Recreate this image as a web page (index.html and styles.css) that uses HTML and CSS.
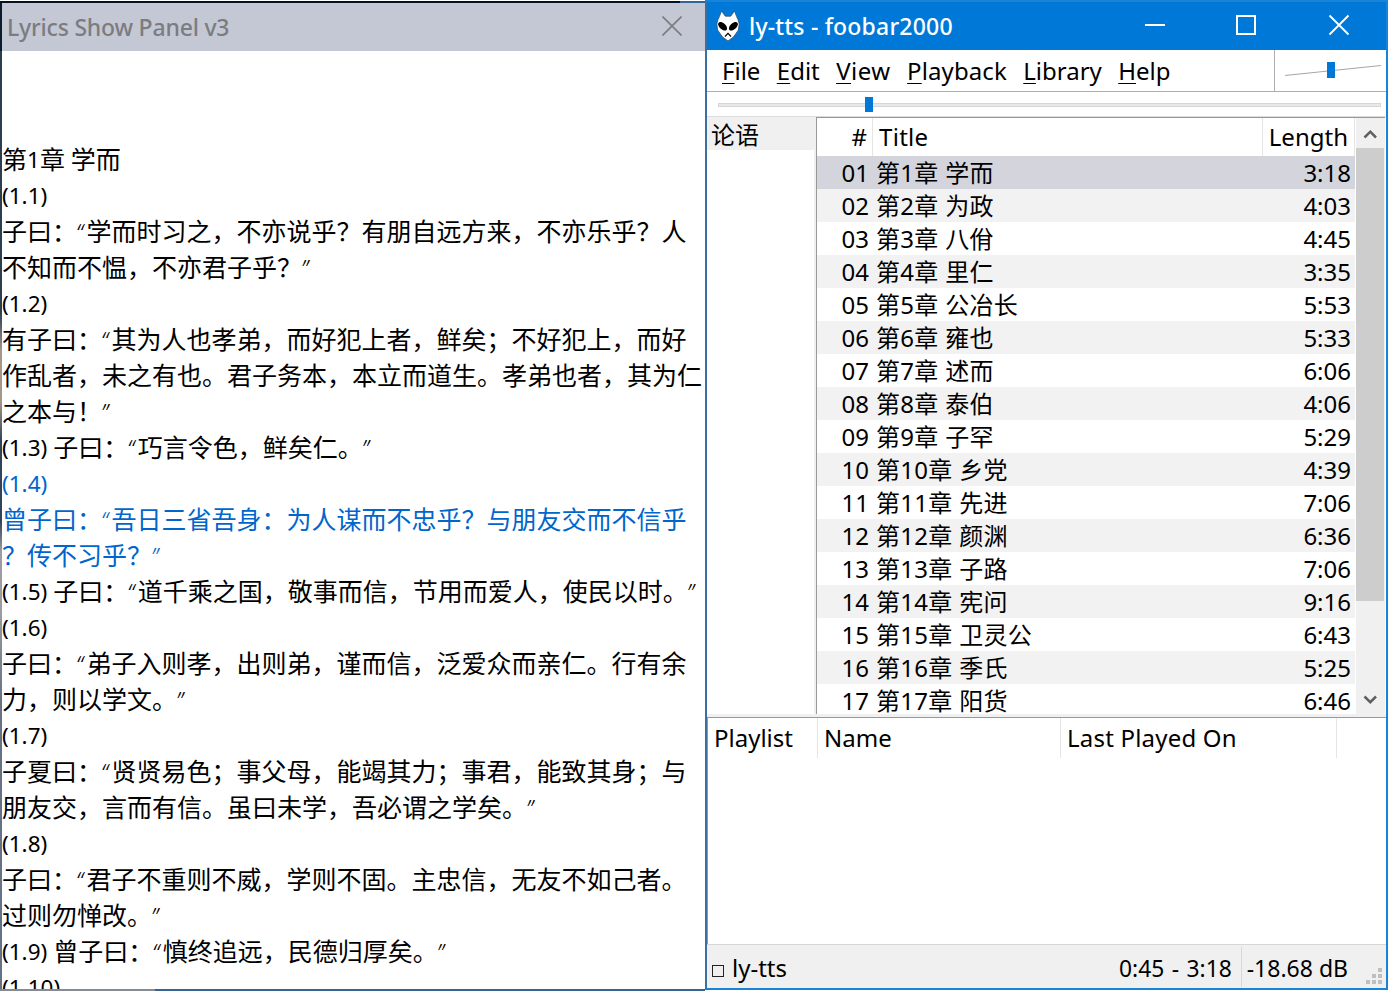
FILE: index.html
```html
<!DOCTYPE html>
<html lang="zh-CN">
<head>
<meta charset="utf-8">
<title>foobar2000</title>
<link rel="stylesheet" href="styles.css">
</head>
<body>
<div class="desktop">
  <section class="lyrics-window">
    <header class="lyrics-title">
      <span class="lyrics-name">Lyrics Show Panel v3</span>
      <svg class="lyrics-close" width="20" height="20" viewBox="0 0 20 20"><path d="M0.5 0.5 19.5 19.5M19.5 0.5 0.5 19.5" stroke="#7c7c80" stroke-width="1.6" fill="none"/></svg>
    </header>
    <div class="lyrics">
      <p>第<i>1</i>章<i> </i>学而</p>
      <p><i>(1.1)</i></p>
      <p>子曰：<q>“</q>学而时习之，不亦说乎？有朋自远方来，不亦乐乎？人</p>
      <p>不知而不愠，不亦君子乎？<q>”</q></p>
      <p><i>(1.2)</i></p>
      <p>有子曰：<q>“</q>其为人也孝弟，而好犯上者，鲜矣；不好犯上，而好</p>
      <p>作乱者，未之有也。君子务本，本立而道生。孝弟也者，其为仁</p>
      <p>之本与！<q>”</q></p>
      <p><i>(1.3) </i>子曰：<q>“</q>巧言令色，鲜矣仁。<q>”</q></p>
      <p class="current"><i>(1.4)</i></p>
      <p class="current">曾子曰：<q>“</q>吾日三省吾身：为人谋而不忠乎？与朋友交而不信乎</p>
      <p class="current">？传不习乎？<q>”</q></p>
      <p><i>(1.5) </i>子曰：<q>“</q>道千乘之国，敬事而信，节用而爱人，使民以时。<q>”</q></p>
      <p><i>(1.6)</i></p>
      <p>子曰：<q>“</q>弟子入则孝，出则弟，谨而信，泛爱众而亲仁。行有余</p>
      <p>力，则以学文。<q>”</q></p>
      <p><i>(1.7)</i></p>
      <p>子夏曰：<q>“</q>贤贤易色；事父母，能竭其力；事君，能致其身；与</p>
      <p>朋友交，言而有信。虽曰未学，吾必谓之学矣。<q>”</q></p>
      <p><i>(1.8)</i></p>
      <p>子曰：<q>“</q>君子不重则不威，学则不固。主忠信，无友不如己者。</p>
      <p>过则勿惮改。<q>”</q></p>
      <p><i>(1.9) </i>曾子曰：<q>“</q>慎终追远，民德归厚矣。<q>”</q></p>
      <p><i>(1.10)</i></p>
    </div>
  </section>

  <section class="player">
    <header class="player-title">
      <svg class="logo" width="24" height="32" viewBox="0 0 24 32">
        <path d="M5.5 1 9.3 6.2H14.7L18.5 1 20.6 6.5 22 9.5 23.2 14 22.4 20 17.5 27 12 31 6.500 27 1.600 20 0.800 14 2 9.500 3.400 6.500Z" fill="#fff" stroke="#34506e" stroke-width="0.800"/>
        <ellipse cx="6.600" cy="16.300" rx="5.400" ry="3.100" transform="rotate(42 6.600 16.300)" fill="#000"/>
        <ellipse cx="17.400" cy="16.300" rx="5.400" ry="3.100" transform="rotate(-42 17.400 16.300)" fill="#000"/>
        <path d="M9 26.500 12 23.300 15 26.500" fill="none" stroke="#000" stroke-width="1.200"/>
      </svg>
      <span class="player-name">ly-tts - foobar2000</span>
      <svg class="controls" width="206" height="22" viewBox="0 0 206 22" fill="none" stroke="#fff">
        <path d="M0 11H20" stroke-width="2"/><rect x="92" y="2" width="18" height="18" stroke-width="2"/><path d="M184.500 1.500 203.500 20.500M203.500 1.500 184.500 20.500" stroke-width="1.800"/>
      </svg>
    </header>
    <div class="toolbar">
      <nav class="menu"><span><u>F</u>ile</span><span><u>E</u>dit</span><span class="view"><u>V</u>iew</span><span class="playback"><u>P</u>layback</span><span><u>L</u>ibrary</span><span><u>H</u>elp</span></nav>
      <svg class="volume" width="111" height="41" viewBox="0 0 111 41"><path d="M10 25.500 106 15.500" stroke="#a6a6a6"/><rect x="52" y="12" width="8" height="16" fill="#0078d7"/></svg>
    </div>
    <div class="seek"><div class="track"><div class="thumb"></div></div></div>
    <div class="browser">
      <aside class="playlists"><div class="playlist">论语</div></aside>
      <main class="tracks">
        <div class="row head"><span class="num">#</span><span class="name">Title</span><span class="len">Length</span></div>
        <div class="row selected"><span class="num">01</span><span class="name">第1章 学而</span><span class="len">3:18</span></div>
        <div class="row alt"><span class="num">02</span><span class="name">第2章 为政</span><span class="len">4:03</span></div>
        <div class="row"><span class="num">03</span><span class="name">第3章 八佾</span><span class="len">4:45</span></div>
        <div class="row alt"><span class="num">04</span><span class="name">第4章 里仁</span><span class="len">3:35</span></div>
        <div class="row"><span class="num">05</span><span class="name">第5章 公冶长</span><span class="len">5:53</span></div>
        <div class="row alt"><span class="num">06</span><span class="name">第6章 雍也</span><span class="len">5:33</span></div>
        <div class="row"><span class="num">07</span><span class="name">第7章 述而</span><span class="len">6:06</span></div>
        <div class="row alt"><span class="num">08</span><span class="name">第8章 泰伯</span><span class="len">4:06</span></div>
        <div class="row"><span class="num">09</span><span class="name">第9章 子罕</span><span class="len">5:29</span></div>
        <div class="row alt"><span class="num">10</span><span class="name">第10章 乡党</span><span class="len">4:39</span></div>
        <div class="row"><span class="num">11</span><span class="name">第11章 先进</span><span class="len">7:06</span></div>
        <div class="row alt"><span class="num">12</span><span class="name">第12章 颜渊</span><span class="len">6:36</span></div>
        <div class="row"><span class="num">13</span><span class="name">第13章 子路</span><span class="len">7:06</span></div>
        <div class="row alt"><span class="num">14</span><span class="name">第14章 宪问</span><span class="len">9:16</span></div>
        <div class="row"><span class="num">15</span><span class="name">第15章 卫灵公</span><span class="len">6:43</span></div>
        <div class="row alt"><span class="num">16</span><span class="name">第16章 季氏</span><span class="len">5:25</span></div>
        <div class="row"><span class="num">17</span><span class="name">第17章 阳货</span><span class="len">6:46</span></div>
      </main>
      <div class="scrollbar">
        <svg width="28" height="30" viewBox="0 0 28 30"><path d="M8.500 19.500 14.300 13.700 20 19.500" fill="none" stroke="#606060" stroke-width="2.500"/></svg>
        <div class="scroll-thumb"></div>
        <svg width="28" height="30" viewBox="0 0 28 30"><path d="M8.500 12.500 14.300 18.200 20 12.500" fill="none" stroke="#606060" stroke-width="2.500"/></svg>
      </div>
    </div>
    <div class="history">
      <div class="history-head"><span class="h-playlist">Playlist</span><span class="h-name">Name</span><span class="h-last">Last Played On</span></div>
    </div>
    <footer class="status">
      <span class="stop"></span><span class="state">ly-tts</span><span class="time">0:45 - 3:18</span><span class="db">-18.68 dB</span>
      <svg class="grip" width="16" height="16" viewBox="0 0 16 16" fill="#bfbfbf"><path d="M12 0h4v4h-4zM6 6h4v4H6zM12 6h4v4h-4zM0 12h4v4H0zM6 12h4v4H6zM12 12h4v4h-4z"/></svg>
    </footer>
  </section>
</div>
</body>
</html>
```
FILE: styles.css
```css
* { box-sizing: border-box; }
body {
  margin: 0;
  width: 1388px;
  height: 991px;
  overflow: hidden;
  background: #fff;
  color: #000;
  font-family: "Noto Sans", "Noto Sans CJK SC", sans-serif;
  font-size: 24px;
}
.desktop { display: flex; height: 991px; }

.lyrics-window {
  width: 705px;
  height: 990px;
  margin-top: 1px;
  padding: 2px 0 2px 2px;
  display: flex;
  flex-direction: column;
  background:
    linear-gradient(90deg, #04121f 0 680px, #336494 680px) top / 100% 2px no-repeat,
    linear-gradient(90deg, #858b90 0 155px, #376392 155px) bottom / 100% 2px no-repeat,
    linear-gradient(#0b1c2c 0 50px, #2c3d50 50px 310px, #a59788 350px 400px, #31435a 440px 520px, #9c9d9e 550px 610px, #657184 700px) left / 2px 100% no-repeat,
    #fff;
}
.lyrics-title {
  height: 48px;
  flex: none;
  display: flex;
  align-items: center;
  justify-content: space-between;
  padding: 0 23px 0 5px;
  background: #c4c8d4;
  color: #7b7c80;
  font-weight: 500;
  font-size: 23px;
  letter-spacing: -0.2px;
  white-space: nowrap;
}
.lyrics-close { margin-top: -2px; }
.lyrics {
  flex: 1;
  min-height: 0;
  overflow: hidden;
  padding-top: 89px;
  font-family: "Noto Sans CJK SC", sans-serif;
  font-size: 25px;
}
.lyrics p { margin: 0; height: 36px; line-height: 36px; white-space: pre; }
.lyrics i { font: normal 22.5px/34px "Noto Sans", sans-serif; vertical-align: 1px; }
.lyrics q { font: italic 300 23px/34px "Noto Sans", sans-serif; quotes: none; display: inline-block; width: 9.5px; text-indent: -1px; }
.lyrics q::before, .lyrics q::after { content: none; }
.current { color: #0066cc; }

.player {
  width: 683px;
  height: 990px;
  border: 2px solid #1883d7;
  border-left-color: #3b6f9f;
  display: flex;
  flex-direction: column;
}
.player-title {
  height: 48px;
  flex: none;
  display: flex;
  align-items: center;
  padding-left: 9px;
  background: #0078d7;
  color: #fff;
  font-size: 23px;
  font-weight: 500;
  letter-spacing: 0.2px;
}
.player-name { margin-left: 9px; white-space: nowrap; }
.controls { margin: -2px 35px 0 auto; }
.toolbar { height: 42px; flex: none; display: flex; border-bottom: 1px solid #adadb3; }
.menu { width: 568px; display: flex; align-items: center; gap: 16.4px; padding-left: 15px; border-right: 1px solid #adadb3; }
.view { letter-spacing: 0.5px; }
.playback { letter-spacing: 0.1px; }
.menu u { text-decoration-thickness: 1px; text-underline-offset: 3px; }
.seek { height: 24px; flex: none; padding: 11px 5px 0 11px; }
.track { height: 4px; background: #e7eaea; border: 1px solid #d6d6d6; }
.thumb { width: 8px; height: 15px; margin: -7px 0 0 146px; background: #0078d7; }
.browser { height: 601px; flex: none; display: flex; border-top: 1px solid #dcdcdc; border-bottom: 3px solid #f0f0f0; }
.playlists { width: 109px; border-right: 2px solid #f0f0f0; }
.playlist { height: 33px; padding-left: 4px; line-height: 35px; background: #f0f0f0; }
.tracks { width: 540px; overflow: hidden; border-left: 1px solid #999; border-top: 1px solid #999; }
.row { display: grid; grid-template-columns: 56px 390px 1fr; height: 33px; width: 538px; line-height: 34px; white-space: nowrap; }
.row.head { height: 38px; line-height: 38px; }
.num { text-align: right; padding-right: 4px; }
.name { padding-left: 3px; letter-spacing: 0.3px; }
.len { text-align: right; padding-right: 4px; }
.head .num { padding-right: 5px; border-right: 1px solid #e5e5e5; }
.head .name { padding-left: 6px; border-right: 1px solid #e5e5e5; }
.head .len { padding-right: 6px; border-right: 1px solid #e5e5e5; }
.selected { background: #d4d5dc; }
.alt { background: #f2f2f2; }
.scrollbar { width: 29px; display: flex; flex-direction: column; justify-content: space-between; border-top: 1px solid #999; background: #f0f0f0; }
.scroll-thumb { width: 28px; height: 453px; margin-bottom: auto; background: #cdcdcd; }
.scrollbar svg { flex: none; }
.history { flex: 1; border-top: 1px solid #999; border-left: 1px solid #999; }
.history-head { height: 40px; display: flex; line-height: 40px; white-space: nowrap; }
.history-head span { border-right: 1px solid #e5e5e5; }
.h-playlist { width: 110px; padding-left: 6px; }
.h-name { width: 243px; padding-left: 6px; }
.h-last { width: 276px; padding-left: 6px; letter-spacing: 0.2px; }
.status { height: 44px; flex: none; display: flex; align-items: center; border-top: 1px solid #d7d7d7; background: #f0f0f0; white-space: nowrap; }
.stop { width: 12px; height: 12px; margin: 9px 8px 0 5px; border: 1px solid #222; }
.state { margin-top: 2px; }
.time { margin-left: auto; margin-top: 3px; font-size: 22.8px; word-spacing: 1.5px; }
.db { height: 40px; margin-left: 9px; padding: 3px 0 0 5px; border-left: 1px solid #d7d7d7; line-height: 37px; font-size: 23px; }
.grip { margin: 18px 4px 0 18px; }
```
